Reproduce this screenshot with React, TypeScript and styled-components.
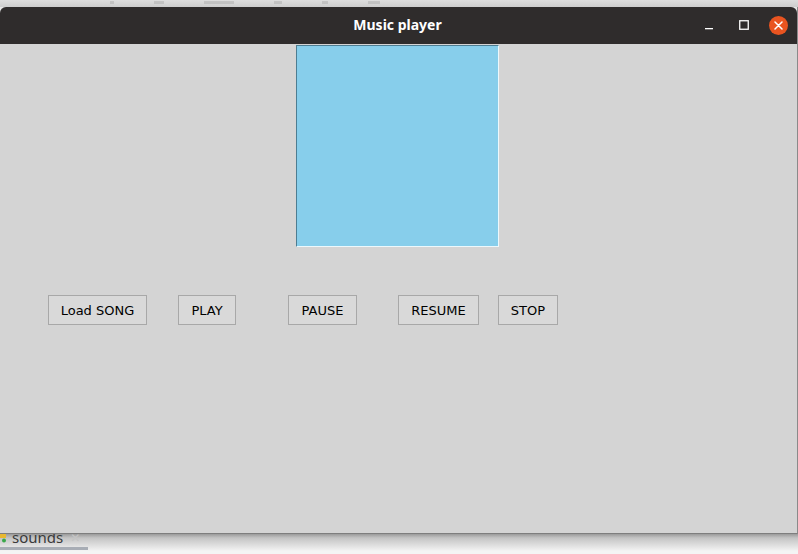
import React from "react";
import styled, { createGlobalStyle } from "styled-components";

const Global = createGlobalStyle`
  html, body { margin: 0; padding: 0; }
  body { width: 798px; height: 554px; overflow: hidden; background: #d0d0d0; }
`;

const Screen = styled.div`
  width: 798px;
  height: 554px;
  display: flex;
  flex-direction: column;
  background: #e6e6e6;
  overflow: hidden;
`;

const DesktopStrip = styled.div`
  height: 7px;
  background: linear-gradient(#dedede, #cdcdcd);
  display: flex;
  align-items: flex-start;
  gap: 40px;
  padding-left: 110px;
`;

const Fragment = styled.div<{ w: number }>`
  width: ${(p) => p.w}px;
  height: 3px;
  margin-top: 1px;
  background: #a8a8a8;
  opacity: 0.45;
`;

const Window = styled.div`
  position: relative;
  z-index: 1;
  width: 797px;
  display: flex;
  flex-direction: column;
  border-right: 1px solid #8a8a8a;
  border-bottom: 1px solid #7e7e7e;
`;

const TitleBar = styled.div`
  height: 37px;
  background: #2f2c2c;
  border-radius: 6px 6px 0 0;
  display: grid;
  grid-template-columns: 1fr auto 1fr;
  align-items: center;
`;

const Title = styled.div`
  grid-column: 2;
  color: #ffffff;
  font-family: "Noto Sans", "DejaVu Sans", sans-serif;
  font-weight: 700;
  font-size: 14px;
  margin: -2px 2px 0 0;
`;

const Controls = styled.div`
  grid-column: 3;
  justify-self: end;
  display: flex;
  align-items: center;
  padding-right: 9px;
  margin-top: -1px;
`;

const CtrlBtn = styled.div<{ w: number; $ml: number }>`
  width: ${(p) => p.w}px;
  margin-left: ${(p) => p.$ml}px;
  height: 20px;
  display: flex;
  align-items: center;
  justify-content: center;
`;

const CloseCircle = styled.div`
  width: 19px;
  height: 19px;
  border-radius: 50%;
  background: #e95420;
  display: flex;
  align-items: center;
  justify-content: center;
`;

const Body = styled.div`
  height: 489px;
  background: #d4d4d4;
  display: flex;
  flex-direction: column;
`;

const Canvas = styled.div`
  margin: 1px 0 0 296px;
  width: 201px;
  height: 200px;
  background: #87ceeb;
  border-top: 1px solid #4d7d92;
  border-left: 1px solid #4d7d92;
  border-right: 1px solid #ecf8fc;
  border-bottom: 1px solid #ecf8fc;
`;

const ButtonRow = styled.div`
  display: flex;
  margin-top: 48px;
  padding-left: 48px;
`;

const TkButton = styled.button<{ $left: number; $w: number }>`
  box-sizing: border-box;
  margin-left: ${(p) => p.$left}px;
  width: ${(p) => p.$w}px;
  height: 30px;
  padding: 0;
  background: #d9d9d9;
  border-top: 1px solid #f2f2f2;
  border-left: 1px solid #f2f2f2;
  border-right: 1px solid #8a8a8a;
  border-bottom: 1px solid #8a8a8a;
  outline: 1px solid #a8a8a8;
  outline-offset: -1px;
  font-family: "DejaVu Sans", sans-serif;
  font-size: 13px;
  color: #000;
  cursor: pointer;
  display: flex;
  align-items: center;
  justify-content: center;
`;

const Below = styled.div`
  flex: 1;
  background: linear-gradient(#9a9a9a 0px, #c4c4c4 4px, #dadada 10px, #ececec 15px, #f4f4f4 17px);
  display: flex;
  flex-direction: column;
`;

const Tab = styled.div`
  display: flex;
  align-items: center;
  gap: 3px;
  height: 14px;
  margin-top: -4px;
  font-family: "Noto Sans", "DejaVu Sans", sans-serif;
  font-size: 15px;
  color: #3a3a3a;
`;

const TabClose = styled.span`
  color: #c4c4c4;
  font-size: 12px;
  margin-left: 4px;
`;

const TabLine = styled.div`
  margin-top: 3px;
  width: 88px;
  height: 3px;
  background: #a8adb5;
`;

const buttons = [
  { label: "Load SONG", left: 0, w: 99 },
  { label: "PLAY", left: 31, w: 58 },
  { label: "PAUSE", left: 52, w: 69 },
  { label: "RESUME", left: 41, w: 81 },
  { label: "STOP", left: 19, w: 60 },
];

export default function App() {
  return (
    <Screen>
      <Global />
      <DesktopStrip>
        <Fragment w={4} />
        <Fragment w={10} />
        <Fragment w={30} />
        <Fragment w={8} />
        <Fragment w={6} />
        <Fragment w={12} />
      </DesktopStrip>
      <Window>
        <TitleBar>
          <Title>Music player</Title>
          <Controls>
            <CtrlBtn w={10} $ml={0}>
              <svg width="10" height="10" viewBox="0 0 10 10">
                <rect x="1" y="8" width="8" height="1.3" fill="#fff" />
              </svg>
            </CtrlBtn>
            <CtrlBtn w={10} $ml={25}>
              <svg width="10" height="10" viewBox="0 0 10 10">
                <rect x="0.75" y="0.75" width="8.5" height="8.5" fill="none" stroke="#fff" strokeWidth="1.3" />
              </svg>
            </CtrlBtn>
            <CtrlBtn w={19} $ml={20}>
              <CloseCircle>
                <svg width="9" height="9" viewBox="0 0 9 9">
                  <path d="M1 1 L8 8 M8 1 L1 8" stroke="#fff" strokeWidth="1.5" strokeLinecap="round" />
                </svg>
              </CloseCircle>
            </CtrlBtn>
          </Controls>
        </TitleBar>
        <Body>
          <Canvas />
          <ButtonRow>
            {buttons.map((b) => (
              <TkButton key={b.label} $left={b.left} $w={b.w}>
                {b.label}
              </TkButton>
            ))}
          </ButtonRow>
        </Body>
      </Window>
      <Below>
        <Tab>
          <svg width="9" height="12" viewBox="0 0 9 12">
            <rect x="0" y="0" width="6" height="7" fill="#e8b830" />
            <circle cx="4" cy="9.5" r="2" fill="#3aa84a" />
          </svg>
          <span>sounds</span>
          <TabClose>✕</TabClose>
        </Tab>
        <TabLine />
      </Below>
    </Screen>
  );
}
